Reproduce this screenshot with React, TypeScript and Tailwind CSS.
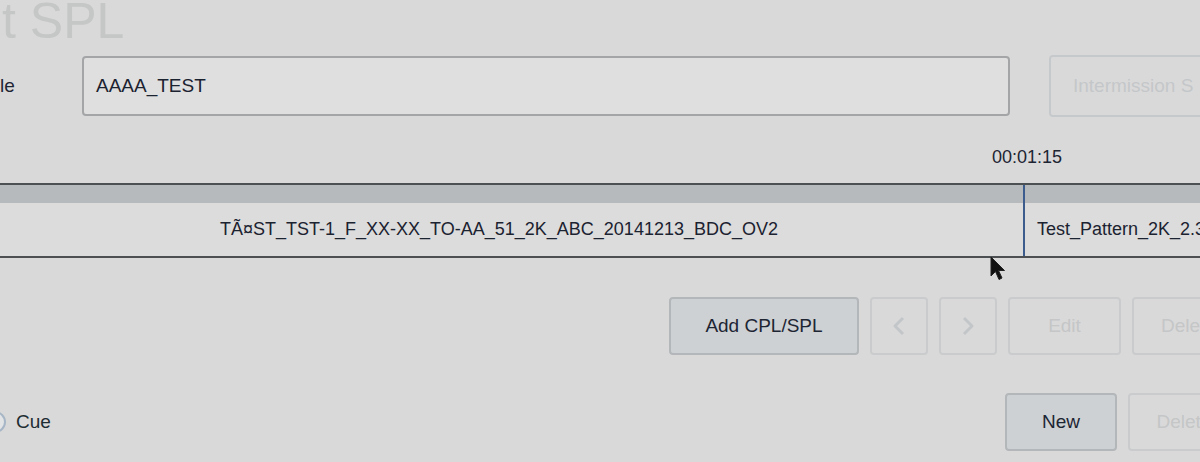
import React from 'react'

const font = { fontFamily: '"Liberation Sans", Arial, sans-serif' }

function Btn({ label, width, disabled, children }: { label?: string; width: string; disabled?: boolean; children?: React.ReactNode }) {
  return (
    <div
      className={`${width} h-[58px] shrink-0 rounded-[4px] border-2 flex items-center justify-center text-[19px] ${
        disabled ? 'border-[#c9cbcc] bg-[#dad9d9] text-[#c4c6c7]' : 'border-[#b3b7ba] bg-[#cdd1d4] text-[#1d2533]'
      }`}
    >
      {children ?? label}
    </div>
  )
}

function Chevron({ dir }: { dir: 'left' | 'right' }) {
  return (
    <svg width="14" height="20" viewBox="0 0 14 20">
      <polyline
        points={dir === 'left' ? '11,2 3,10 11,18' : '3,2 11,10 3,18'}
        fill="none"
        stroke="#c2c6c8"
        strokeWidth="3"
        strokeLinejoin="round"
      />
    </svg>
  )
}

export default function App() {
  return (
    <div className="relative w-[1200px] h-[462px] overflow-hidden bg-[#dad9d9] flex flex-col" style={font}>
      {/* page title */}
      <div className="h-[55px] shrink-0 overflow-visible">
        <div className="-mt-[4px] ml-[2px] text-[50px] leading-[50px] text-[#c5c6c6] whitespace-nowrap">t SPL</div>
      </div>

      {/* title input row */}
      <div className="h-[62px] shrink-0 flex items-center">
        <div className="w-[82px] shrink-0 text-[19px] text-[#1d2533]">le</div>
        <div className="w-[928px] h-[60px] shrink-0 rounded-[4px] border-2 border-[#a3a5a7] bg-[#dfdfdf] flex items-center pl-[12px] text-[19px] text-[#1b2230]">
          AAAA_TEST
        </div>
        <div className="ml-[39px] w-[170px] h-[62px] shrink-0 rounded-[4px] border-2 border-[#c6c9cb] bg-[#dad9d9] flex items-center pl-[22px] text-[19px] text-[#c4c7c9] whitespace-nowrap">
          Intermission S
        </div>
      </div>

      {/* time marker */}
      <div className="h-[66px] shrink-0 pt-[30px] pl-[992px] text-[18px] leading-[20px] text-[#1d2533]">00:01:15</div>

      {/* timeline */}
      <div className="h-[75px] shrink-0 flex border-t-2 border-b-2 border-[#4d5052]">
        <div className="-ml-[25px] w-[1048px] shrink-0 flex flex-col">
          <div className="h-[18px] bg-[#b6babd]" />
          <div className="flex-1 bg-[#dcdcdc] flex items-center justify-center text-[18px] text-[#1b2230] whitespace-nowrap">
            TÃ¤ST_TST-1_F_XX-XX_TO-AA_51_2K_ABC_20141213_BDC_OV2
          </div>
        </div>
        <div className="flex-1 flex flex-col border-l-2 border-[#3d5c8e]">
          <div className="h-[18px] bg-[#b6babd]" />
          <div className="flex-1 bg-[#dcdcdc] flex items-center pl-[12px] text-[18px] text-[#1b2230] whitespace-nowrap overflow-hidden">
            Test_Pattern_2K_2.39
          </div>
        </div>
      </div>

      {/* clip actions */}
      <div className="mt-[39px] h-[58px] shrink-0 flex gap-[11px] pl-[669px]">
        <Btn label="Add CPL/SPL" width="w-[190px]" />
        <Btn width="w-[58px]" disabled>
          <Chevron dir="left" />
        </Btn>
        <Btn width="w-[58px]" disabled>
          <Chevron dir="right" />
        </Btn>
        <Btn label="Edit" width="w-[113px]" disabled />
        <Btn label="Delete" width="w-[113px]" disabled />
      </div>

      {/* bottom row */}
      <div className="mt-[38px] h-[58px] shrink-0 flex items-center">
        <div className="w-[1005px] shrink-0 flex items-center">
          <div className="-ml-[16px] w-[22px] h-[22px] shrink-0 rounded-full border-2 border-[#a7b6c6] bg-[#e2e4e6]" />
          <div className="ml-[10px] text-[19px] text-[#1d2d33]">Cue</div>
        </div>
        <div className="flex gap-[11px]">
          <Btn label="New" width="w-[112px]" />
          <Btn label="Delete" width="w-[112px]" disabled />
        </div>
      </div>

      {/* mouse pointer */}
      <svg className="absolute left-[990px] top-[256px]" width="18" height="26" viewBox="0 0 18 26">
        <path d="M1 1 L1 20 L5.5 15.5 L9 23.5 L12 22 L8.5 14.5 L14.5 14.5 Z" fill="#111" stroke="#222" strokeWidth="1" strokeLinejoin="round" />
      </svg>
    </div>
  )
}
